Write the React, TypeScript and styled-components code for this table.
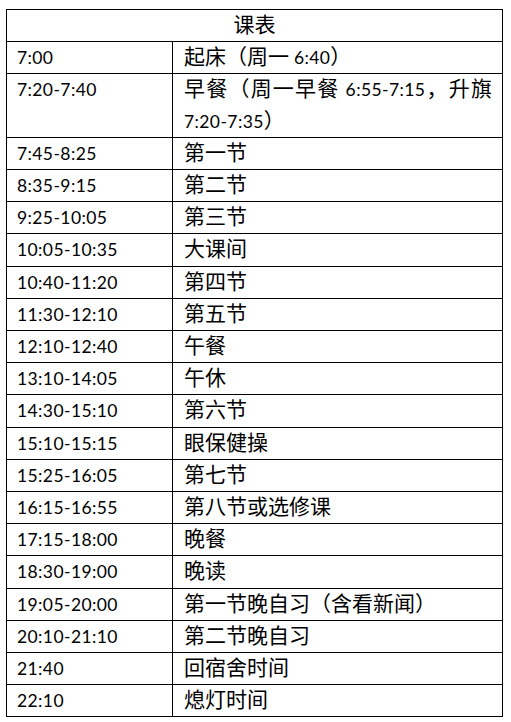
import React from "react";
import styled, { createGlobalStyle } from "styled-components";

const GlobalStyle = createGlobalStyle`
  html, body {
    margin: 0;
    padding: 0;
    background: #ffffff;
  }
`;

const Page = styled.div`
  padding: 9px 0 0 6px;
`;

const Table = styled.table`
  border-collapse: collapse;
  width: 497px;
  table-layout: fixed;
  font-family: Lato, "Noto Sans CJK SC", sans-serif;
  font-size: 17.5px;
  letter-spacing: 0.4px;
  color: #000;
`;

const Cell = styled.td<{ $align?: "left" | "center" | "justify"; $pl?: number }>`
  border: 1px solid #000;
  padding: 0 10px 0 ${(p) => p.$pl ?? 10}px;
  line-height: 31.2px;
  vertical-align: top;
  text-align: ${(p) => p.$align ?? "left"};
`;

const Han = styled.span`
  font-family: "Noto Sans CJK SC", sans-serif;
  font-size: 21px;
  letter-spacing: 0;
  line-height: 1;
`;

const rows: [string, string][] = [
  ["7:00", "起床（周一 6:40）"],
  ["7:20-7:40", "早餐（周一早餐 6:55-7:15，升旗 7:20-7:35）"],
  ["7:45-8:25", "第一节"],
  ["8:35-9:15", "第二节"],
  ["9:25-10:05", "第三节"],
  ["10:05-10:35", "大课间"],
  ["10:40-11:20", "第四节"],
  ["11:30-12:10", "第五节"],
  ["12:10-12:40", "午餐"],
  ["13:10-14:05", "午休"],
  ["14:30-15:10", "第六节"],
  ["15:10-15:15", "眼保健操"],
  ["15:25-16:05", "第七节"],
  ["16:15-16:55", "第八节或选修课"],
  ["17:15-18:00", "晚餐"],
  ["18:30-19:00", "晚读"],
  ["19:05-20:00", "第一节晚自习（含看新闻）"],
  ["20:10-21:10", "第二节晚自习"],
  ["21:40", "回宿舍时间"],
  ["22:10", "熄灯时间"],
];

const CJK = /([\u2E80-\u9FFF\u3000-\u303F\uFF00-\uFFEF]+)/;

function Mixed({ text }: { text: string }) {
  const parts = text.split(CJK);
  return (
    <>
      {parts.map((part, i) =>
        i % 2 === 1 ? <Han key={i}>{part}</Han> : <React.Fragment key={i}>{part}</React.Fragment>
      )}
    </>
  );
}

export default function App() {
  return (
    <Page>
      <GlobalStyle />
      <Table lang="zh-CN">
        <colgroup>
          <col style={{ width: "166px" }} />
          <col />
        </colgroup>
        <tbody>
          <tr>
            <Cell colSpan={2} $align="center">
              <Mixed text="课表" />
            </Cell>
          </tr>
          {rows.map(([time, what]) => (
            <tr key={time}>
              <Cell>{time}</Cell>
              <Cell $align="justify" $pl={11}>
                <Mixed text={what} />
              </Cell>
            </tr>
          ))}
        </tbody>
      </Table>
    </Page>
  );
}
